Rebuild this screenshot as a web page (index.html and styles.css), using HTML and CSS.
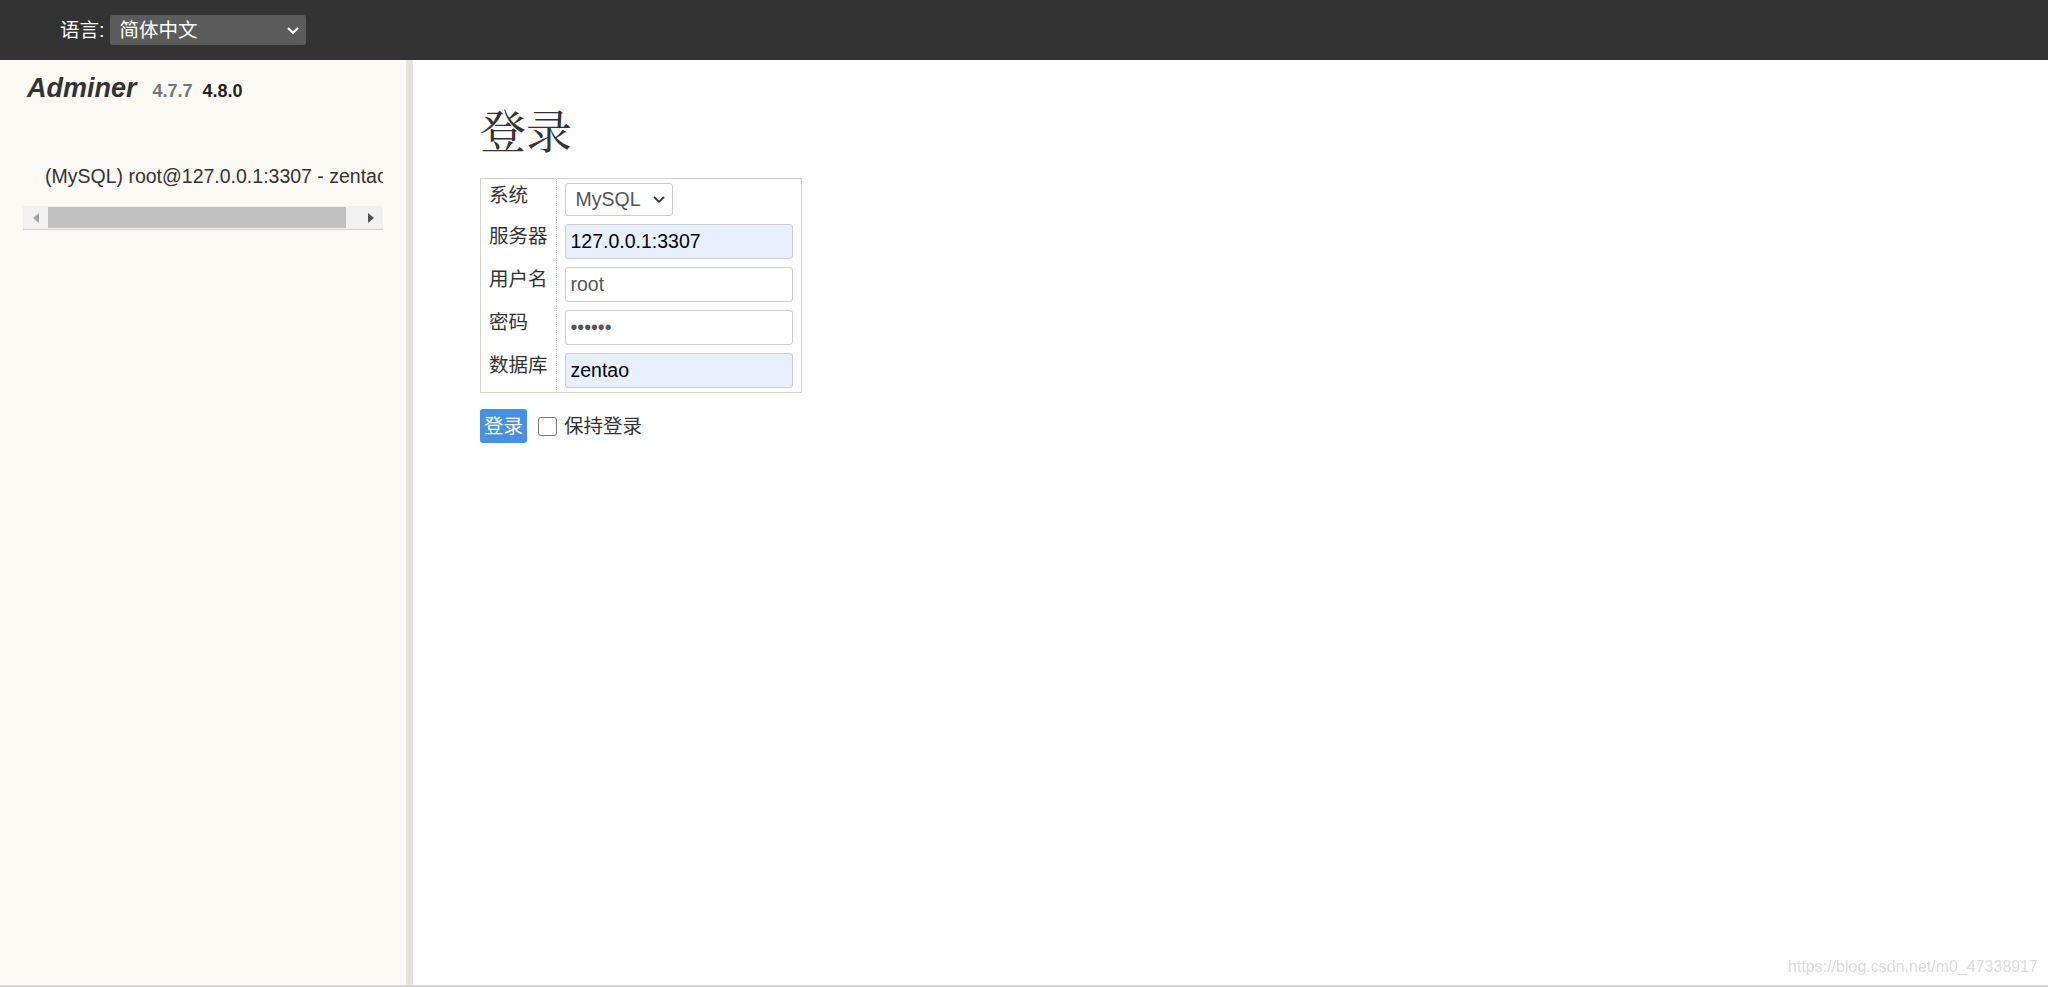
FILE: index.html
```html
<!DOCTYPE html>
<html lang="zh-CN">

<head>
  <meta charset="UTF-8">
  <meta name="viewport" content="width=device-width, initial-scale=1.0">
  <title>登录 - Adminer</title>
  <link rel="stylesheet" href="styles.css">
</head>

<body>

  <div class="lang-bar">
    <span class="lang-label">语言:</span>
    <div class="select select-dark">
      <span>简体中文</span>
      <svg class="chevron" width="12" height="7" viewBox="0 0 12 7">
        <path d="M1 1 L6 5.8 L11 1" fill="none" stroke="#fff" stroke-width="2.2" />
      </svg>
    </div>
  </div>

  <div class="layout">
    <div class="menu">
      <h1 class="logo"><a href="">Adminer</a><span class="version old">4.7.7</span><span class="version new">4.8.0</span></h1>
      <div class="dbs">
        <p class="db-line">(MySQL) root@127.0.0.1:3307 - zentao</p>
        <div class="hscroll">
          <span class="sb-btn"><i class="tri tri-left"></i></span>
          <span class="sb-track"><span class="sb-thumb"></span></span>
          <span class="sb-btn"><i class="tri tri-right"></i></span>
        </div>
      </div>
    </div>

    <div class="content">
      <h2 class="title">登录</h2>
      <table class="login">
        <tr>
          <th>系统</th>
          <td>
            <div class="select select-light">
              <span>MySQL</span>
              <svg class="chevron" width="12" height="7" viewBox="0 0 12 7">
                <path d="M1 1 L6 5.8 L11 1" fill="none" stroke="#333" stroke-width="1.8" />
              </svg>
            </div>
          </td>
        </tr>
        <tr>
          <th>服务器</th>
          <td><input class="field autofill" type="text" value="127.0.0.1:3307"></td>
        </tr>
        <tr>
          <th>用户名</th>
          <td><input class="field" type="text" value="root"></td>
        </tr>
        <tr>
          <th>密码</th>
          <td><input class="field" type="password" value="123456"></td>
        </tr>
        <tr>
          <th>数据库</th>
          <td><input class="field autofill" type="text" value="zentao"></td>
        </tr>
      </table>
      <div class="actions">
        <button class="btn">登录</button>
        <input class="check" type="checkbox" id="permanent">
        <label class="check-label" for="permanent">保持登录</label>
      </div>
    </div>
  </div>

  <div class="watermark">https://blog.csdn.net/m0_47338917</div>

</body>

</html>
```

FILE: styles.css
```css
html,
body {
  margin: 0;
  padding: 0;
}

body {
  font: 19.5px/1.25 "Liberation Sans", "Noto Sans CJK SC", sans-serif;
  color: #333;
  background: #fff;
}

a {
  text-decoration: none;
}

/* 顶部语言栏 */
.lang-bar {
  height: 60px;
  background-color: #333;
  display: flex;
  align-items: center;
  padding-left: 60px;
  color: #fff;
}

.lang-label {
  margin-right: 6px;
}

.select {
  box-sizing: border-box;
  display: flex;
  align-items: center;
  justify-content: space-between;
  border-radius: 3px;
}

.select-dark {
  width: 196px;
  height: 30px;
  background-color: #5c5c5c;
  color: #fff;
  padding: 0 7px 0 9px;
}

.select-light {
  width: 108px;
  height: 33px;
  border: 1px solid #ccc;
  background-color: #fff;
  color: #555;
  padding: 0 7px 0 10px;
}

.chevron {
  display: block;
}

/* 主体 */
.layout {
  display: flex;
  height: calc(100vh - 60px);
  box-sizing: border-box;
  border-bottom: 2px solid #d6d6d6;
}

.menu {
  width: 406px;
  flex-shrink: 0;
  background-color: #fbfaf5;
  border-right: 7px solid #e6e3dc;
}

.logo {
  margin: 0;
  padding: 11px 0 0 27px;
  font-size: 27px;
  line-height: 35px;
  font-weight: bold;
  font-style: italic;
  white-space: nowrap;
}

.logo a {
  color: #333;
}

.version {
  font-size: 18px;
  font-style: normal;
  font-weight: bold;
}

.version.old {
  color: #777;
  margin-left: 16px;
}

.version.new {
  color: #222;
  margin-left: 10px;
}

.dbs {
  margin: 55px 0 0 23px;
  width: 360px;
}

.db-line {
  margin: 0;
  height: 24px;
  padding-left: 22px;
  white-space: nowrap;
  overflow: hidden;
}

/* 横向滚动条 */
.hscroll {
  margin-top: 18px;
  display: flex;
  height: 23px;
  background-color: #f1f1f1;
  border-bottom: 1px solid #cfcfcf;
}

.sb-btn {
  width: 25px;
  display: flex;
  align-items: center;
  justify-content: center;
}

.sb-track {
  flex: 1;
  display: flex;
  padding: 1px 0;
}

.sb-thumb {
  width: 298px;
  background-color: #c1c1c1;
}

.tri {
  width: 0;
  height: 0;
  border-top: 5px solid transparent;
  border-bottom: 5px solid transparent;
}

.tri-left {
  border-right: 6px solid #a3a3a3;
}

.tri-right {
  border-left: 6px solid #505050;
}

/* 登录表单 */
.content {
  flex: 1;
  padding-left: 67px;
}

.title {
  margin: 41px 0 0;
  font-family: "Noto Serif CJK SC", "Noto Sans CJK SC", serif;
  font-size: 46px;
  line-height: 54px;
  font-weight: normal;
  color: #333;
}

.login {
  margin-top: 23px;
  border-collapse: collapse;
  border: 1px solid #d4d1ca;
}

.login th {
  font-weight: normal;
  text-align: left;
  vertical-align: top;
  padding: 4px 8px;
  border-right: 1px dotted #c8c8c8;
  white-space: nowrap;
}

.login td {
  padding: 4px 8px;
}

.field {
  display: block;
  box-sizing: border-box;
  width: 228px;
  height: 35px;
  margin: 0;
  padding: 0 5px;
  border: 1px solid #ccc;
  border-radius: 3px;
  font: inherit;
  color: #555;
  background-color: #fff;
  outline: none;
}

.field.autofill {
  background-color: #e8f0fe;
  border-color: #c9ccd1;
  color: #000;
}

.actions {
  margin-top: 16px;
  display: flex;
  align-items: center;
}

.btn {
  height: 34px;
  margin: 0;
  padding: 0 4px;
  border: 0;
  border-radius: 3px;
  background-color: #4a90e2;
  color: #fff;
  font: inherit;
}

.check {
  appearance: none;
  box-sizing: border-box;
  width: 19px;
  height: 19px;
  margin: 0 0 0 11px;
  border: 1px solid #767676;
  border-radius: 3px;
  background-color: #fff;
}

.check-label {
  margin-left: 7px;
}

.watermark {
  position: fixed;
  right: 10px;
  bottom: 11px;
  font: 16px "Liberation Sans", sans-serif;
  color: #dcdcdc;
}
```
